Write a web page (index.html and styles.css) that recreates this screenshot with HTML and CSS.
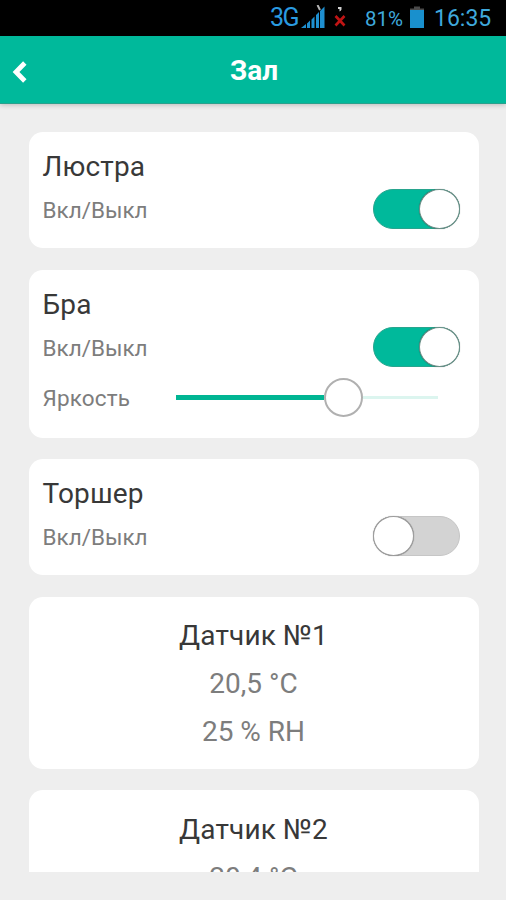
FILE: index.html
```html
<!DOCTYPE html>
<html lang="ru">
<head>
<meta charset="utf-8">
<title>Зал</title>
<link rel="stylesheet" href="styles.css">
</head>
<body>
<div class="status">
  <span class="network">3G</span>
  <svg class="signal" width="24" height="26" viewBox="0 0 24 26">
    <path d="M0 23L5 19V23ZM6 18.500L9 15.500V23H6ZM10.500 14.500L13.500 11.500V23H10.500ZM15 10L18 7V23H15ZM19 6L23.500 1.500V23H19Z" fill="#1e8fd0"/>
    <path d="M16.500 0L19 5" stroke="#b5b5b5" stroke-width="2"/>
  </svg>
  <svg class="nosim" width="14" height="24" viewBox="0 0 14 24">
    <path d="M5 2H8.500V4.500Q8 6 6.500 6.500V4H5Z" fill="#d0d0d0"/>
    <path d="M2.500 11L11.500 20.500M11.500 11L2.500 20.500" stroke="#c01414" stroke-width="2.600"/>
  </svg>
  <span class="percent">81%</span>
  <svg class="battery" width="14" height="23" viewBox="0 0 14 23">
    <path d="M0 4V2.500H4V0.500H10V2.500H14V4Z" fill="#4b4b4b"/>
    <path d="M0 4H14V22H0Z" fill="#1990cd"/>
  </svg>
  <span class="clock">16:35</span>
</div>
<header class="bar">
  <svg class="back" width="15" height="22" viewBox="0 0 15 22"><path d="M12.800 2L4 11L12.800 20" fill="none" stroke="#fff" stroke-width="4.800"/></svg>
  <h1>Зал</h1>
</header>
<main class="list">
  <section class="card">
    <h2>Люстра</h2>
    <div class="row"><span class="label">Вкл/Выкл</span><span class="switch on"><i></i></span></div>
  </section>
  <section class="card brightness-card">
    <h2>Бра</h2>
    <div class="row"><span class="label">Вкл/Выкл</span><span class="switch on"><i></i></span></div>
    <div class="row slide-row"><span class="label bright">Яркость</span><span class="slider"><b></b><i></i><em></em></span></div>
  </section>
  <section class="card">
    <h2>Торшер</h2>
    <div class="row"><span class="label">Вкл/Выкл</span><span class="switch"><i></i></span></div>
  </section>
  <section class="card sensor">
    <h2>Датчик №1</h2>
    <p>20,5 °C</p>
    <p>25 % RH</p>
  </section>
  <section class="card sensor">
    <h2>Датчик №2</h2>
    <p>20,4 °C</p>
  </section>
</main>
</body>
</html>
```
FILE: styles.css
```css
* { box-sizing: border-box; }
body {
  margin: 0;
  height: 900px;
  overflow: hidden;
  background: #eee;
  font-family: Roboto, "Liberation Sans", sans-serif;
}
h1, h2, p { margin: 0; }
.status {
  height: 36px;
  background: #000;
  color: #3fa9dc;
  display: flex;
  align-items: flex-start;
  padding: 5px 14px 0 0;
  justify-content: flex-end;
  line-height: 28px;
  white-space: nowrap;
}
.network { width: 28px; margin-right: 3px; margin-top: -1px; font-size: 25px; letter-spacing: -1.5px; color: #2a9be0; }
.signal { margin-right: 8px; }
.nosim { margin-right: 18px; }
.percent { width: 38px; margin: 0 7px 0 0; font-size: 20.500px; }
.battery { margin: 1px 10px 0 0; }
.clock { width: 58px; font-size: 23px; }
.bar {
  position: relative;
  height: 68px;
  background: #00b99b;
  border-bottom: 1px solid #2aa08c;
  box-shadow: 0 1px 5px rgba(0, 0, 0, .22);
  display: grid;
  grid-template-columns: 36px 1fr 34px;
  align-items: center;
}
.back { margin: 4px 0 0 12px; }
h1 { color: #fff; font-size: 28px; line-height: 40px; font-weight: 700; text-align: center; padding-top: 2px; }
.list {
  height: 768px;
  overflow: hidden;
  padding: 28px 27.500px 0 28.500px;
  display: flex;
  flex-direction: column;
  gap: 21.5px;
}
.card {
  flex: none;
  height: 116px;
  border-radius: 14px;
  background: #fff;
  padding: 14px 19px 0 14px;
}
.brightness-card { height: 168px; }
h2 {
  font-size: 28px;
  line-height: 41px;
  font-weight: 400;
  letter-spacing: .15px;
  color: #383838;
  margin-bottom: 2px;
  white-space: nowrap;
}
.row { display: flex; justify-content: space-between; align-items: center; height: 40px; }
.label { font-size: 22.500px; line-height: 30px; color: #7d7d7d; padding-top: 2px; white-space: nowrap; }
.switch {
  display: flex;
  width: 87px;
  height: 40px;
  border-radius: 20px;
  border: 1px solid #c6c6c6;
  background: #d3d3d3;
}
.switch i {
  width: 41px;
  height: 40px;
  margin: -1px;
  border: 1.500px solid #9c9c9c;
  border-radius: 50%;
  background: #fff;
  box-shadow: 0 0 1px rgba(0, 0, 0, .45);
}
.switch.on { justify-content: flex-end; background: #00b99b; border-color: #28a58e; }
.switch.on i { border-color: #6b8f87; }
.slide-row { margin-top: 11px; justify-content: flex-start; }
.bright { width: 133px; letter-spacing: .15px; padding-top: 1px; }
.slider { display: flex; align-items: center; width: 262px; }
.slider b { width: 148px; height: 4.500px; background: #00b593; }
.slider i { width: 39px; height: 39px; border: 2px solid #b0b0b0; border-radius: 50%; background: #fff; }
.slider em { flex: 1; height: 3px; background: #dcf5ef; }
.sensor { height: 172px; padding: 18.500px 0 0; text-align: center; }
.sensor h2 { margin-bottom: 3px; }
.sensor p { height: 48px; padding-top: 1px; font-size: 28px; line-height: 48px; color: #7d7d7d; }
```
